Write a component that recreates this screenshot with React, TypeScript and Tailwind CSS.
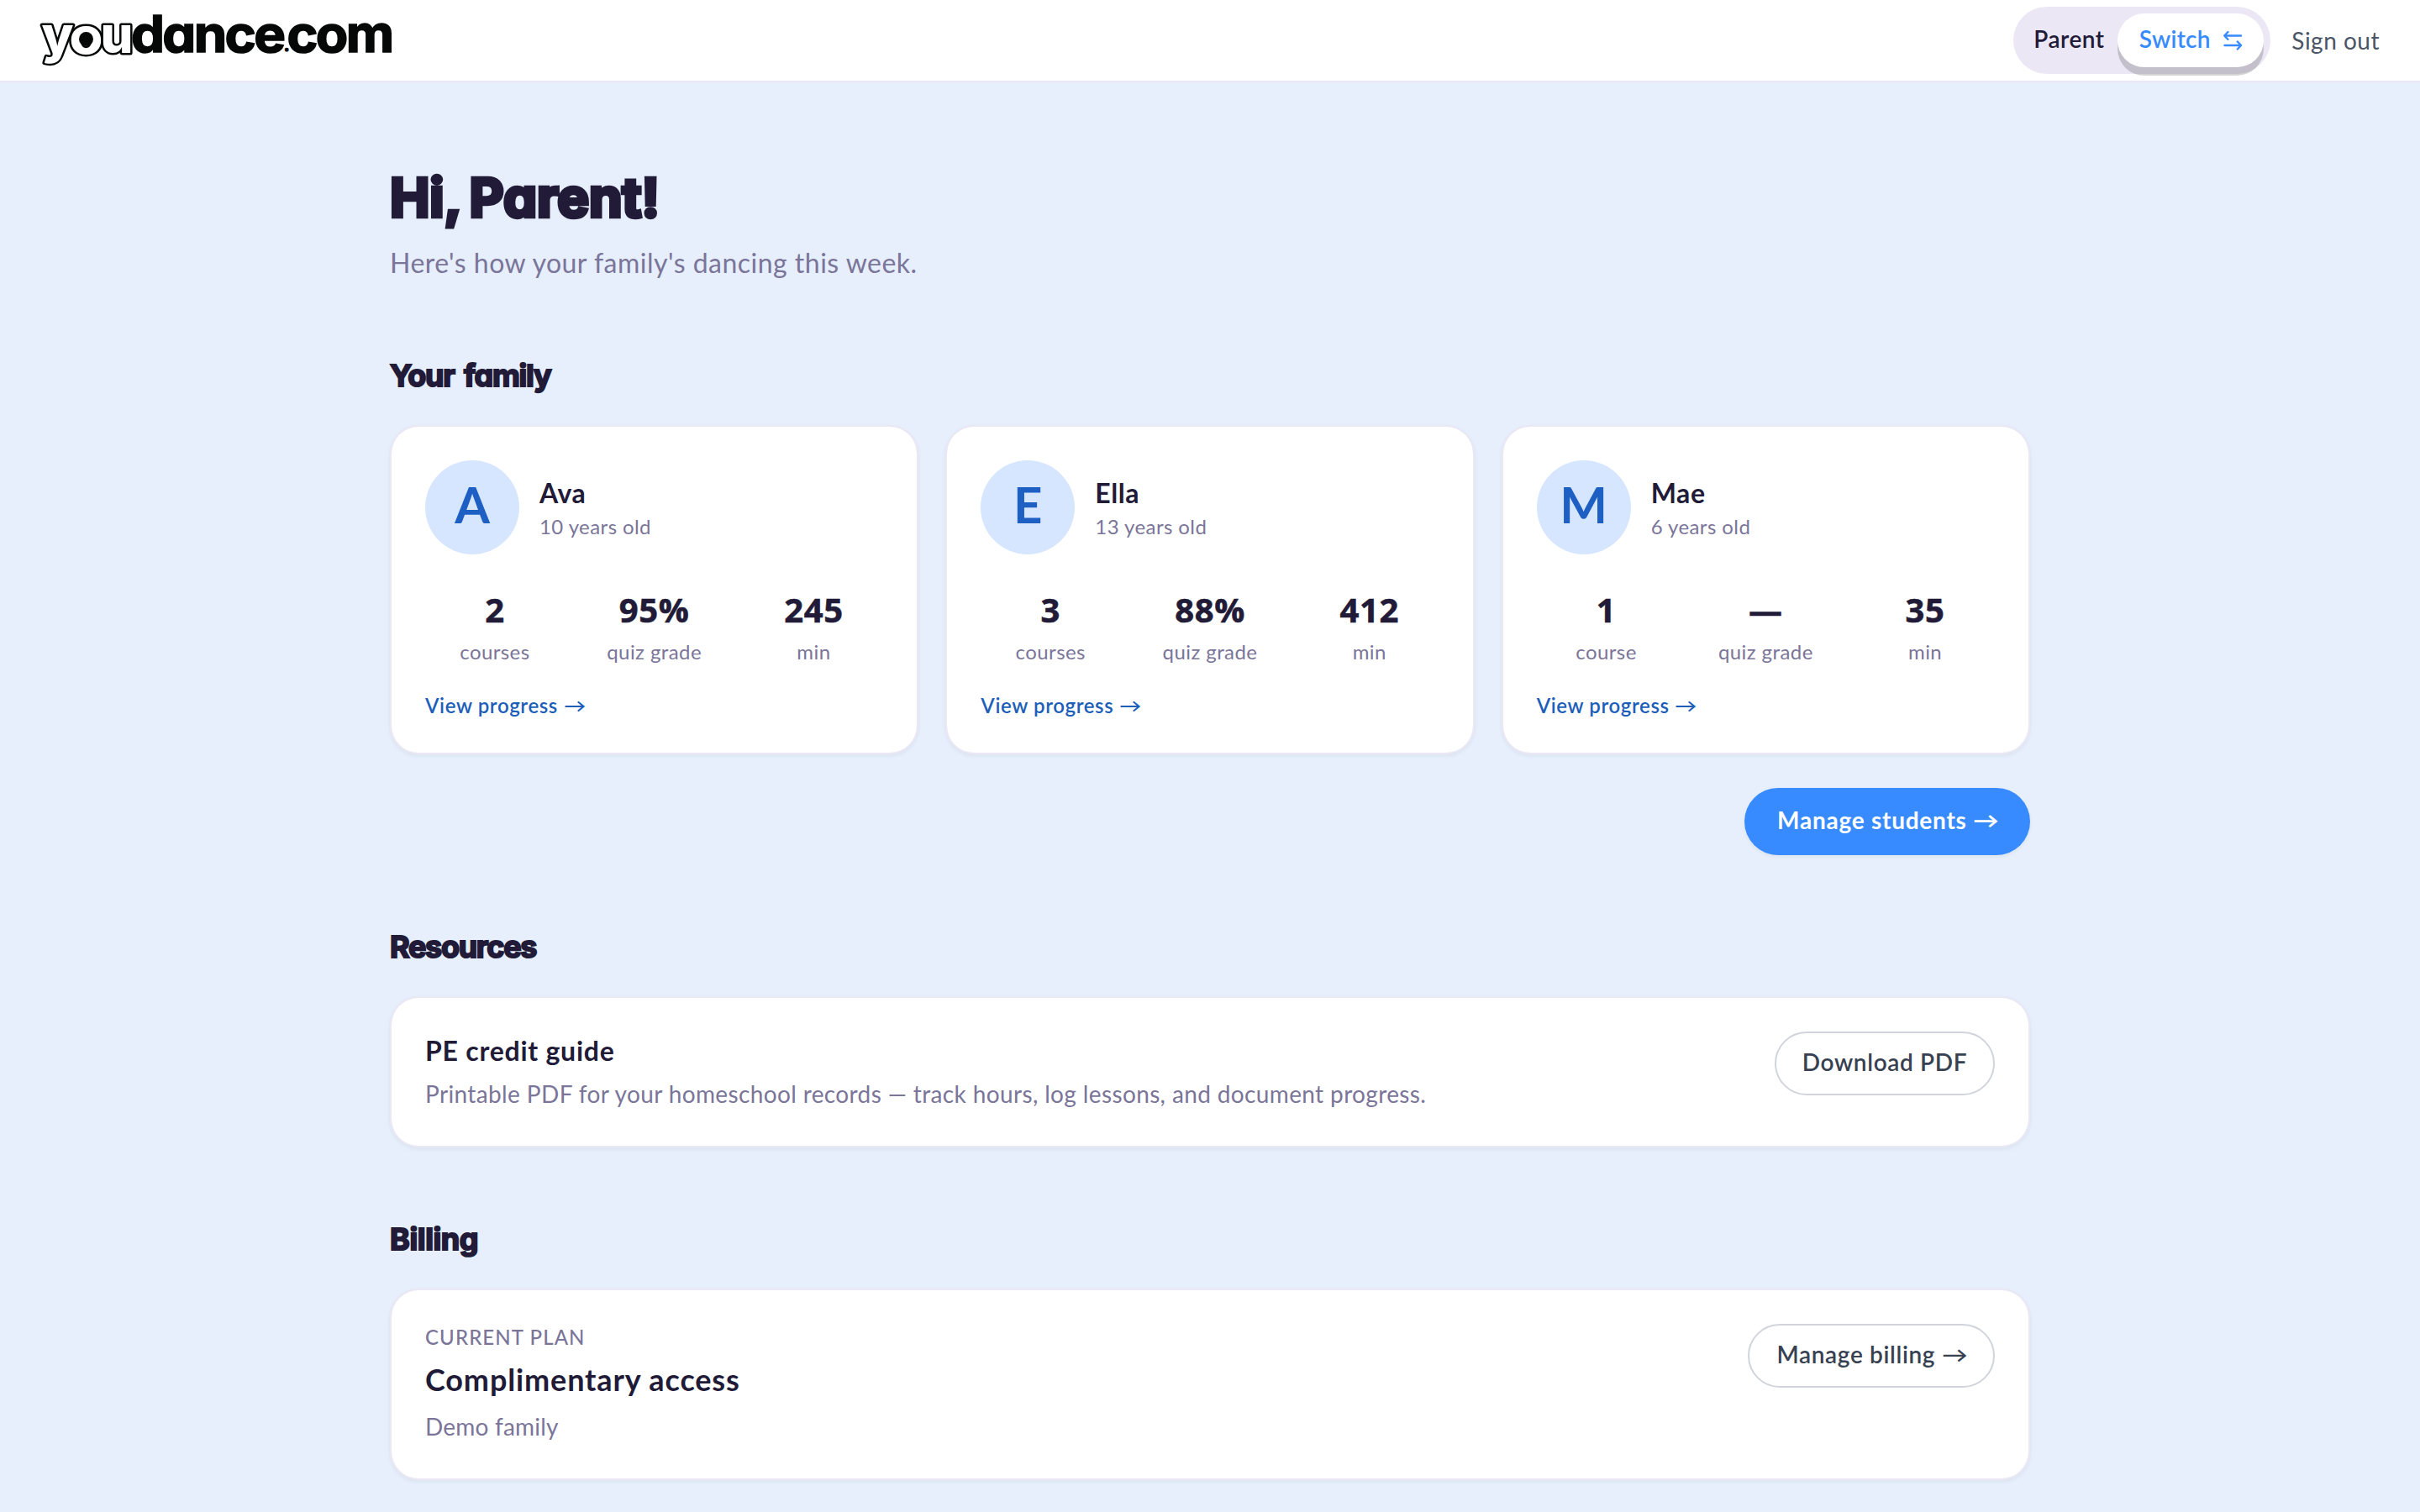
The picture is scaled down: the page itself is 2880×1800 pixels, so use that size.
import type { ReactNode } from "react";
import { clsx } from "clsx";

interface Student {
  name: string;
  age: number;
  courses: number;
  quizGrade: string;
  minutes: number;
}

const STUDENTS: Student[] = [
  { name: "Ava", age: 10, courses: 2, quizGrade: "95%", minutes: 245 },
  { name: "Ella", age: 13, courses: 3, quizGrade: "88%", minutes: 412 },
  { name: "Mae", age: 6, courses: 1, quizGrade: "—", minutes: 35 },
];

const Logo = () => (
  <svg
    width="426"
    height="96"
    viewBox="46 0 426 96"
    className="font-['Inter',sans-serif] text-[60px] font-bold [font-feature-settings:'cv11']"
  >
    <g
      fill="#fff"
      stroke="#050807"
      strokeWidth="5"
      strokeLinejoin="round"
      className="font-extrabold [paint-order:stroke]"
    >
      <text x="49.5" y="63" textLength="38" lengthAdjust="spacingAndGlyphs">y</text>
      <text x="82.5" y="63.5" textLength="40" lengthAdjust="spacingAndGlyphs">o</text>
      <text x="119.5" y="63" textLength="39" lengthAdjust="spacingAndGlyphs">u</text>
    </g>
    <circle cx="102.5" cy="46.5" r="8.5" fill="#050807" />
    <g fill="#050807" stroke="#050807" strokeWidth="1.6" className="tracking-[-2.5px]">
      <text x="156" y="62.3" textLength="181.5" lengthAdjust="spacingAndGlyphs">dance</text>
      <text x="337.5" y="61" fontSize="22" strokeWidth="1">.</text>
      <text x="341.5" y="62.3" textLength="125" lengthAdjust="spacingAndGlyphs">com</text>
    </g>
  </svg>
);

const SwitchIcon = () => (
  <svg
    width="24"
    height="24"
    viewBox="0 0 24 24"
    fill="none"
    stroke="currentColor"
    strokeWidth="2.4"
    strokeLinecap="round"
    strokeLinejoin="round"
  >
    <path d="M22 6.5H2.5M6.5 2 2.2 6.5 6.5 11" />
    <path d="M2.5 18H22M17.8 13.5 22 18l-4.2 4.5" />
  </svg>
);

const Arrow = () => (
  <span className="inline-block origin-left scale-x-[1.1] scale-y-90">→</span>
);

const Card = ({ className, children }: { className?: string; children: ReactNode }) => (
  <div
    className={clsx(
      "rounded-[34px] border-2 border-[#ebe7f5] bg-white bg-clip-padding p-10 shadow-[0_2px_5px_rgba(33,27,56,0.06)]",
      className
    )}
  >
    {children}
  </div>
);

const SectionTitle = ({ className, children }: { className?: string; children: ReactNode }) => (
  <h2
    className={clsx(
      "mb-[34px] font-['Inter',sans-serif] text-[36px] leading-[50px] font-bold [font-feature-settings:'cv11'] [-webkit-text-stroke:2px_#211b38]",
      className
    )}
  >
    {children}
  </h2>
);

const Stat = ({ value, label }: { value: string | number; label: string }) => (
  <div className="text-center">
    <p className="font-['Open_Sans',sans-serif] text-[40px] leading-[56px] font-bold tracking-[0.6px] [-webkit-text-stroke:0.6px_#211b38]">
      {value}
    </p>
    <p className="mt-1.5 text-2xl leading-8 tracking-[0.42px] text-[#7a7599]">{label}</p>
  </div>
);

const OutlineButton = ({ className, children }: { className?: string; children: ReactNode }) => (
  <button
    className={clsx(
      "flex h-[76px] shrink-0 items-center justify-center rounded-full border-2 border-[#d1d5db] bg-white pb-1 text-[28px] font-semibold tracking-[0.65px] text-[#374151]",
      className
    )}
  >
    {children}
  </button>
);

const StudentCard = ({ student }: { student: Student }) => (
  <Card>
    <div className="flex items-center gap-6">
      <div className="flex size-28 items-center justify-center rounded-full bg-[#d6e6ff] pb-2 text-[60px] leading-none font-bold text-[#1d5fc2]">
        {student.name[0]}
      </div>
      <div>
        <h3 className="text-[32px] leading-[42px] font-bold tracking-[0.6px]">{student.name}</h3>
        <p className="mt-[3px] text-2xl leading-8 tracking-[0.42px] text-[#7a7599]">
          {student.age} years old
        </p>
      </div>
    </div>
    <div className="mt-[38px] grid grid-cols-3 gap-6">
      <Stat value={student.courses} label={student.courses === 1 ? "course" : "courses"} />
      <Stat value={student.quizGrade} label="quiz grade" />
      <Stat value={student.minutes} label="min" />
    </div>
    <a href="#" className="mt-[31px] block text-2xl leading-[33px] font-semibold tracking-[0.62px] text-[#1d5fb8]">
      View progress <Arrow />
    </a>
  </Card>
);

export default function App() {
  return (
    <div className="min-h-screen bg-[#e6effb] font-['Lato',sans-serif] text-[#211b38]">
      <header className="flex h-[98px] items-center justify-between border-b-2 border-[#ebe7f5] bg-white pr-12 pl-[46px]">
        <Logo />
        <div className="flex items-center gap-[25px]">
          <div className="flex h-20 w-[306px] items-center justify-between rounded-full bg-[#ebe7f5] pr-2 pl-6">
            <span className="pb-1 text-[28px] font-semibold tracking-[0.5px]">Parent</span>
            <button className="flex h-16 w-[174px] items-center justify-center gap-3.5 rounded-full bg-white text-[28px] font-semibold tracking-[0.3px] text-[#388bff] shadow-[0_10px_0_rgba(0,0,0,0.17)]">
              <span className="pb-1">Switch</span>
              <SwitchIcon />
            </button>
          </div>
          <a href="#" className="text-[28px] tracking-[0.5px] text-[#4a5565]">
            Sign out
          </a>
        </div>
      </header>

      <main className="mx-auto w-[1952px] pt-[97px]">
        <h1 className="font-['Inter',sans-serif] text-[63.5px] leading-[80px] font-bold tracking-[-0.1px] [word-spacing:-4px] [font-feature-settings:'cv11'] [-webkit-text-stroke:4.5px_#211b38]">
          Hi, Parent!
        </h1>
        <p className="mt-3.5 text-[32px] leading-[48px] tracking-[0.48px] text-[#7a7599]">
          Here's how your family's dancing this week.
        </p>

        <section className="mt-[85px]">
          <SectionTitle className="tracking-[-1.2px] [word-spacing:4px]">Your family</SectionTitle>
          <div className="grid grid-cols-3 gap-8">
            {STUDENTS.map((student) => (
              <StudentCard key={student.name} student={student} />
            ))}
          </div>
          <div className="mt-10 flex justify-end">
            <button className="flex h-20 w-[340px] items-center justify-center rounded-full bg-[#388bff] pb-1 text-[28px] font-bold tracking-[0.75px] text-white shadow-[0_2px_4px_rgba(33,27,56,0.06)]">
              <span>
                Manage students <Arrow />
              </span>
            </button>
          </div>
        </section>

        <section className="mt-[84px]">
          <SectionTitle className="tracking-[-1.3px]">Resources</SectionTitle>
          <Card className="flex h-[180px] items-start justify-between">
            <div>
              <h3 className="text-[32px] leading-[46px] font-bold tracking-[0.75px]">PE credit guide</h3>
              <p className="mt-1.5 text-[28px] leading-[44px] tracking-[0.37px] text-[#7a7599]">
                Printable PDF for your homeschool records — track hours, log lessons, and document progress.
              </p>
            </div>
            <OutlineButton className="w-[262px]">Download PDF</OutlineButton>
          </Card>
        </section>

        <section className="mt-[84px]">
          <SectionTitle className="tracking-[-0.4px]">Billing</SectionTitle>
          <Card className="flex h-[228px] items-start justify-between">
            <div>
              <p className="text-2xl leading-8 font-medium tracking-[1.1px] text-[#7a7599] uppercase">
                Current plan
              </p>
              <p className="mt-2.5 text-4xl leading-[48px] font-bold tracking-[0.87px]">Complimentary access</p>
              <p className="mt-3 text-[28px] leading-10 tracking-[0.2px] text-[#7a7599]">Demo family</p>
            </div>
            <OutlineButton className="w-[294px]">
              <span>
                Manage billing <Arrow />
              </span>
            </OutlineButton>
          </Card>
        </section>
      </main>
    </div>
  );
}
